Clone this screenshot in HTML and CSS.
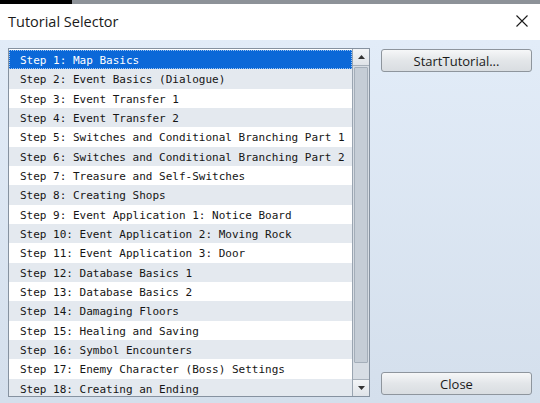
FILE: index.html
```html
<!DOCTYPE html>
<html>
<head>
<meta charset="utf-8">
<link rel="stylesheet" href="styles.css">
</head>
<body>
<div class="window">
  <div class="topstrip"><div class="dark"></div><div class="grey"></div></div>
  <div class="titlebar">
    <span class="title">Tutorial Selector</span>
    <svg class="close-x" width="12" height="12" viewBox="0 0 12 12"><path d="M0.5 0.5 L11.5 11.5 M11.5 0.5 L0.5 11.5" stroke="#1a1a1a" stroke-width="1.1" fill="none"/></svg>
  </div>
  <div class="content">
    <div class="listbox">
      <div class="rows">
        <div class="row sel">Step 1: Map Basics</div>
        <div class="row">Step 2: Event Basics (Dialogue)</div>
        <div class="row">Step 3: Event Transfer 1</div>
        <div class="row">Step 4: Event Transfer 2</div>
        <div class="row">Step 5: Switches and Conditional Branching Part 1</div>
        <div class="row">Step 6: Switches and Conditional Branching Part 2</div>
        <div class="row">Step 7: Treasure and Self-Switches</div>
        <div class="row">Step 8: Creating Shops</div>
        <div class="row">Step 9: Event Application 1: Notice Board</div>
        <div class="row">Step 10: Event Application 2: Moving Rock</div>
        <div class="row">Step 11: Event Application 3: Door</div>
        <div class="row">Step 12: Database Basics 1</div>
        <div class="row">Step 13: Database Basics 2</div>
        <div class="row">Step 14: Damaging Floors</div>
        <div class="row">Step 15: Healing and Saving</div>
        <div class="row">Step 16: Symbol Encounters</div>
        <div class="row">Step 17: Enemy Character (Boss) Settings</div>
        <div class="row">Step 18: Creating an Ending</div>
      </div>
      <div class="scrollbar">
        <div class="sbtn"><svg width="7" height="4" viewBox="0 0 7 4"><path d="M0 4 L3.5 0 L7 4 Z" fill="#333"/></svg></div>
        <div class="thumb"></div>
        <div class="sbtn"><svg width="7" height="4" viewBox="0 0 7 4"><path d="M0 0 L7 0 L3.5 4 Z" fill="#333"/></svg></div>
      </div>
    </div>
    <div class="side">
      <button class="btn">StartTutorial...</button>
      <button class="btn">Close</button>
    </div>
  </div>
</div>
</body>
</html>
```
FILE: styles.css
```css
html, body {
  margin: 0;
  padding: 0;
  width: 540px;
  height: 403px;
  overflow: hidden;
}
.window {
  width: 540px;
  height: 403px;
  display: flex;
  flex-direction: column;
}
.topstrip {
  height: 4px;
  display: flex;
}
.topstrip .dark {
  width: 72px;
  background: #000;
}
.topstrip .grey {
  flex: 1;
  background: #8d9298;
}
.titlebar {
  height: 36px;
  background: #fff;
  display: flex;
  align-items: center;
  justify-content: space-between;
  padding: 0 12px 0 8px;
  box-sizing: border-box;
}
.title {
  font-family: "Open Sans", "Noto Sans", sans-serif;
  font-size: 14.5px;
  color: #1a1a1a;
  position: relative;
  top: -1px;
}
.close-x {
  position: relative;
  top: -1px;
}
.content {
  flex: 1;
  background: linear-gradient(#e2ecf8, #d4dfec);
  display: flex;
  padding: 8px 8px 6px 8px;
  box-sizing: border-box;
}
.listbox {
  width: 362px;
  height: 349px;
  border: 1px solid #8692a0;
  box-sizing: border-box;
  display: flex;
  background: #fff;
}
.rows {
  flex: 1;
  padding-top: 1px;
  overflow: hidden;
}
.row {
  height: 19.33px;
  line-height: 21px;
  font-family: "DejaVu Sans Mono", monospace;
  font-size: 11px;
  color: #151515;
  padding-left: 11px;
  white-space: nowrap;
}
.row:nth-child(even) {
  background: #e4e9ef;
}
.row.sel {
  background: #0b68d8;
  color: #fff;
  outline: 1px dotted #9cc4f2;
  outline-offset: -1px;
}
.scrollbar {
  width: 16px;
  border-left: 1px solid #9aa5b1;
  background: #d7dde4;
  display: flex;
  flex-direction: column;
}
.sbtn {
  height: 17px;
  background: linear-gradient(#f3f5f7, #dfe3e8);
  border-bottom: 1px solid #a7b0ba;
  display: flex;
  align-items: center;
  justify-content: center;
  box-sizing: border-box;
}
.sbtn:last-child {
  border-bottom: none;
  border-top: 1px solid #a7b0ba;
}
.thumb {
  flex: 1;
  margin: 1px 1px 16px 1px;
  background: #c5cdd6;
  border: 1px solid #a4aeb9;
  border-radius: 1px;
}
.side {
  margin-left: 11px;
  width: 151px;
  display: flex;
  flex-direction: column;
  justify-content: space-between;
  padding: 1px 0 2px 0;
}
.btn {
  height: 23px;
  width: 151px;
  border: 1px solid #8e959d;
  border-radius: 3px;
  background: linear-gradient(#f6f7f8, #e3e6e9 50%, #d9dde1);
  font-family: "Open Sans", "Noto Sans", sans-serif;
  font-size: 13px;
  color: #1a1a1a;
  padding: 0;
  line-height: 20px;
}
```
